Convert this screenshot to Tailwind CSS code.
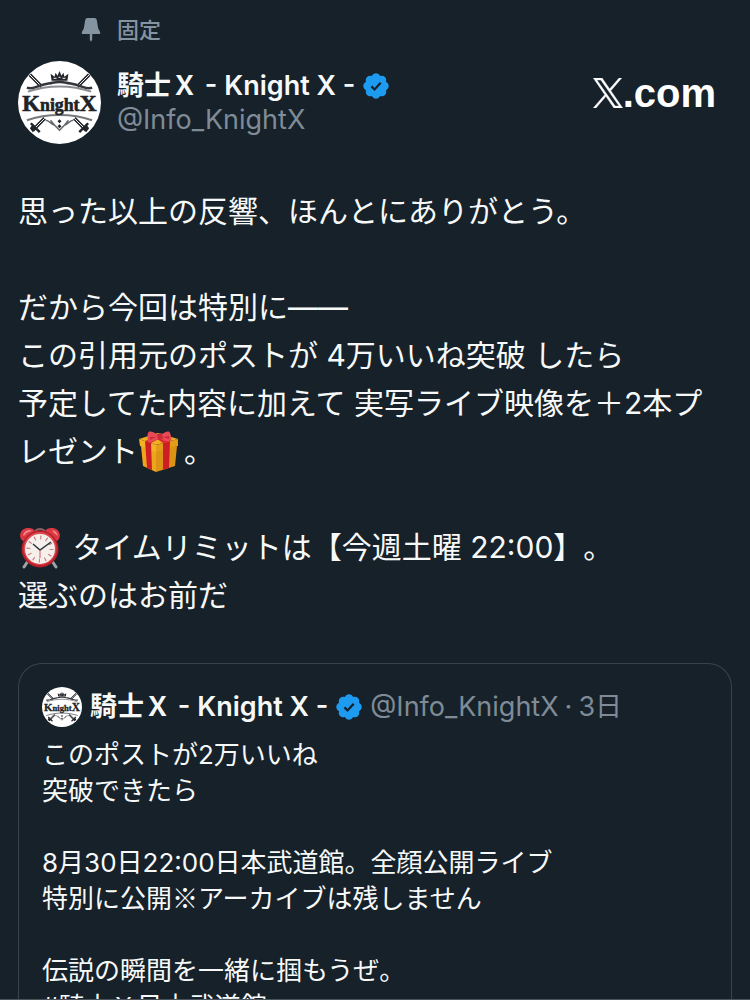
<!DOCTYPE html>
<html lang="ja">
<head>
<meta charset="utf-8">
<meta name="viewport" content="width=device-width, initial-scale=1">
<title>騎士Ｘ - Knight X -</title>
<script src="https://cdn.jsdelivr.net/npm/@tailwindcss/browser@4"></script>
</head>
<body class="bg-[#16212a] text-[#f7f9f9] font-['Inter','Noto_Sans_CJK_JP',sans-serif] [text-spacing-trim:space-all]">
<svg class="hidden" aria-hidden="true">
  <symbol id="crest" viewBox="0 0 84 84">
    <circle cx="42" cy="42" r="42" fill="#fff"/>
    <g stroke="#22252a" stroke-width="3.500">
      <path d="M12 14 24 26M72 14 60 26M15 70 27 58M69 70 57 58"/>
      <path d="M13 63 22 72M71 63 62 72" stroke-width="2.500"/>
    </g>
    <g stroke="#fff" stroke-width="1"><path d="M12 14 24 26M72 14 60 26M18 67 27 58M66 67 57 58"/></g>
    <path d="m12 68 3-4 4 4-4 4zM72 68l-3-4-4 4 4 4z" fill="#22252a"/>
    <path d="M34 20 33 13l4 3 1-4 2 3 2-5 2 5 2-3 1 4 4-3-1 7z" fill="#22252a"/>
    <path d="M36 17.500h3M41 16.500h2M45 17.500h3" stroke="#fff" stroke-width="1"/>
    <g fill="none" stroke="#33363a">
      <path d="M9 27c5 2 9-1 13-2 6-2 9-2 13-3 5-1 9-1 14 0 4 1 7 1 13 3 4 1 8 4 13 2" stroke-width="2.500"/>
      <path d="M10 31c20-7 44-7 64 0" stroke="#8b8d90" stroke-width="2"/>
      <path d="M9 60c20-7 46-7 66 0" stroke="#77797c" stroke-width="2"/>
      <path d="M28 60c4 0 5 4 9 5l5 5 5-5c4-1 5-5 9-5M33 60l4 5M51 60l-4 5" stroke="#66696d" stroke-width="1.500"/>
    </g>
    <path d="m42 59 2 2-2 2-2-2zM42 64l2 2-2 2-2-2z" fill="#22252a"/>
    <text x="42" y="51" text-anchor="middle" fill="#202226" stroke="#202226" stroke-width=".6" font-family="'Liberation Serif',serif" font-weight="700" font-size="18"><tspan font-size="23">K</tspan><tspan>night</tspan><tspan font-size="24">X</tspan></text>
  </symbol>
  <symbol id="verified" viewBox="1.500 1.500 21 21">
    <path fill="#1d9bf0" d="M22.250 12c0-1.430-.88-2.670-2.190-3.340.46-1.390.2-2.900-.81-3.910s-2.520-1.270-3.910-.81c-.66-1.310-1.910-2.190-3.340-2.190s-2.670.88-3.330 2.190c-1.400-.46-2.910-.2-3.920.81s-1.260 2.520-.8 3.910c-1.310.67-2.200 1.910-2.200 3.340s.89 2.670 2.200 3.340c-.46 1.390-.21 2.900.8 3.910s2.520 1.260 3.910.81c.67 1.310 1.910 2.190 3.340 2.190s2.680-.88 3.340-2.190c1.390.45 2.900.2 3.910-.81s1.270-2.520.81-3.910c1.310-.67 2.190-1.910 2.190-3.340z"/>
    <path d="m8.300 12.300 2.500 2.500 5-5.500" fill="none" stroke="#16212a" stroke-width="1.800"/>
  </symbol>
</svg>

<main class="h-screen overflow-hidden border-b border-[#4a535c] px-[18px] pt-3.5">
  <p class="flex items-center gap-[15px] pl-[62px] text-[22px] leading-8 font-medium text-[#8594a1]">
    <svg class="h-6 w-[22px] shrink-0" viewBox="0 0 22 24" aria-hidden="true"><path fill="#8594a1" d="M7.500 0h7q2 0 2.300 2l1.300 8c.3 1.800 2.200 3.200 2.200 5.200 0 .6-.3.800-.8.800h-7.300v5.500L11 24l-1.200-2.500V16H2.500c-.5 0-.8-.2-.8-.8 0-2 1.900-3.400 2.200-5.200l1.300-8Q5.500 0 7.500 0z"/></svg>
    <span>固定</span>
  </p>

  <header class="mt-[15px] flex items-center">
    <svg class="size-[83px] shrink-0" role="img" aria-label="Knight X"><use href="#crest"/></svg>
    <div class="ml-4 min-w-0 flex-1">
      <div class="flex items-center gap-2">
        <a href="#profile" class="text-[27px] leading-[34px] font-semibold whitespace-nowrap">騎士Ｘ - Knight X -</a>
        <svg class="size-[26px] shrink-0" role="img" aria-label="認証済み"><use href="#verified"/></svg>
      </div>
      <a href="#profile" class="block text-[27px] leading-[34px] text-[#7f8b96]">@Info_KnightX</a>
    </div>
    <a href="#x" aria-label="X.com" class="mr-4 mb-5 flex items-end">
      <svg class="mb-[7px] h-[30px] w-[30px]" viewBox="0 0 1200 1227" aria-hidden="true"><path fill="#fff" stroke="#fff" stroke-width="20" d="M714.163 519.284 1160.890 0H1055.030L667.137 450.887 357.328 0H0L468.492 681.821 0 1226.370H105.866L515.491 750.218 842.672 1226.370H1200L714.137 519.284ZM569.165 687.828 521.697 619.934 144.011 79.694H306.615L611.412 515.685 658.880 583.579 1055.080 1150.300H892.476L569.165 687.854Z"/></svg>
      <span class="font-['Liberation_Sans',sans-serif] text-[40px] leading-[44px] font-bold text-white">.com</span>
    </a>
  </header>

  <div class="mt-[43px] text-[30px] leading-[48px]">
    <p>思った以上の反響、ほんとにありがとう。</p>
    <p class="mt-12">だから今回は特別に――<br>この引用元のポストが 4万いいね突破 したら<br>予定してた内容に加えて 実写ライブ映像を＋2本プレゼント<svg class="-mt-0.5 mr-1 mb-0.5 inline-block h-[42px] w-[42px] align-middle" viewBox="0 0 42 42" role="img" aria-label="プレゼント">
      <path fill="#efa51b" d="m3 15 15 5v21L5 35z"/><path fill="#dc9215" d="m18 20 21-5-2 20-19 6z"/>
      <path fill="#f0ad20" d="M1 8 20 2l20 6-22 6z"/><path fill="#f4b126" d="m1 8 17 6v7L2 15z"/><path fill="#e39b18" d="m18 14 22-6v7l-22 6z"/>
      <path fill="#cf1d25" d="m7 10 6 2 1 27-5-2zM25 12l7-2-1 27-6 2z"/><path fill="#dd2831" d="m7 10 15-6 4 1-13 7zM15 5l5-1 12 6-7 2z"/>
      <path fill="#e84b56" d="M20 4C16 1 11-1 10 2s-1 7 1 9c3 0 6-2 9-3zM23 4c4-3 8-5 9-2s2 6 1 8c-3 1-7 0-10-2z"/><path fill="#cb2b38" d="m19 3 5-1 1 6-5 1zM12 6l6 0-6 3zM31 5l-6 1 6 2z"/>
    </svg>。</p>
    <p class="mt-12"><svg class="-mt-0.5 mr-0.5 mb-0.5 inline-block h-[42px] w-[44px] align-middle" viewBox="0 0 44 42" role="img" aria-label="目覚まし時計">
      <path d="m10 34-4 6M34 34l4 6" stroke="#9ca3a9" stroke-width="3" stroke-linecap="round"/>
      <path d="M17 4q5-4 10 0" fill="none" stroke="#8a6265" stroke-width="2"/>
      <path fill="#dc3843" d="M3 12C0 6 5 0 11 1q4 0 6 3L6 14q-2 0-3-2zM41 12c3-6-2-12-8-11q-4 0-6 3l11 10q2 0 3-2z"/>
      <path fill="#f18a8e" d="M5 8q2-5 7-5l2 1Q8 5 6 9zM34 3q5 1 6 6l-4-3z"/>
      <circle cx="22" cy="22" r="18.500" fill="#b91f2a"/><circle cx="22" cy="21.500" r="16.500" fill="#dc4a50"/><circle cx="22" cy="22" r="15" fill="#f5f0ec"/>
      <circle cx="22" cy="22" r="11.500" fill="none" stroke="#c46f75" stroke-width="4" stroke-dasharray="1 5.021"/>
      <path d="m15 17 7 6 11-8" fill="none" stroke="#30363b" stroke-width="1.500"/><path d="M22 23v8" stroke="#d85a60"/>
    </svg> タイムリミットは【今週土曜 22:00】。<br>選ぶのはお前だ</p>
  </div>

  <article class="mt-11 rounded-t-[24px] border border-b-0 border-[#38444d] px-[23px] pt-[23px]">
    <div class="flex items-center gap-2 text-[27px] leading-10 whitespace-nowrap">
      <svg class="size-10 shrink-0" role="img" aria-label="Knight X"><use href="#crest"/></svg>
      <a href="#quoted" class="font-semibold">騎士Ｘ - Knight X -</a>
      <svg class="size-[26px] shrink-0" role="img" aria-label="認証済み"><use href="#verified"/></svg>
      <span class="flex gap-1.5 text-[#7f8b96]"><a href="#quoted">@Info_KnightX</a><span>·</span><time>3日</time></span>
    </div>
    <div class="mt-2.5 text-[26px] leading-9">
      <p>このポストが2万いいね<br>突破できたら</p>
      <p class="mt-9">8月30日22:00日本武道館。全顔公開ライブ<br>特別に公開<span class="font-['Noto_Sans_CJK_JP',sans-serif] leading-none">※</span>アーカイブは残しません</p>
      <p class="mt-9">伝説の瞬間を一緒に掴もうぜ。<br><a href="#tag">#騎士Ｘ日本武道館</a></p>
    </div>
  </article>
</main>
</body>
</html>
